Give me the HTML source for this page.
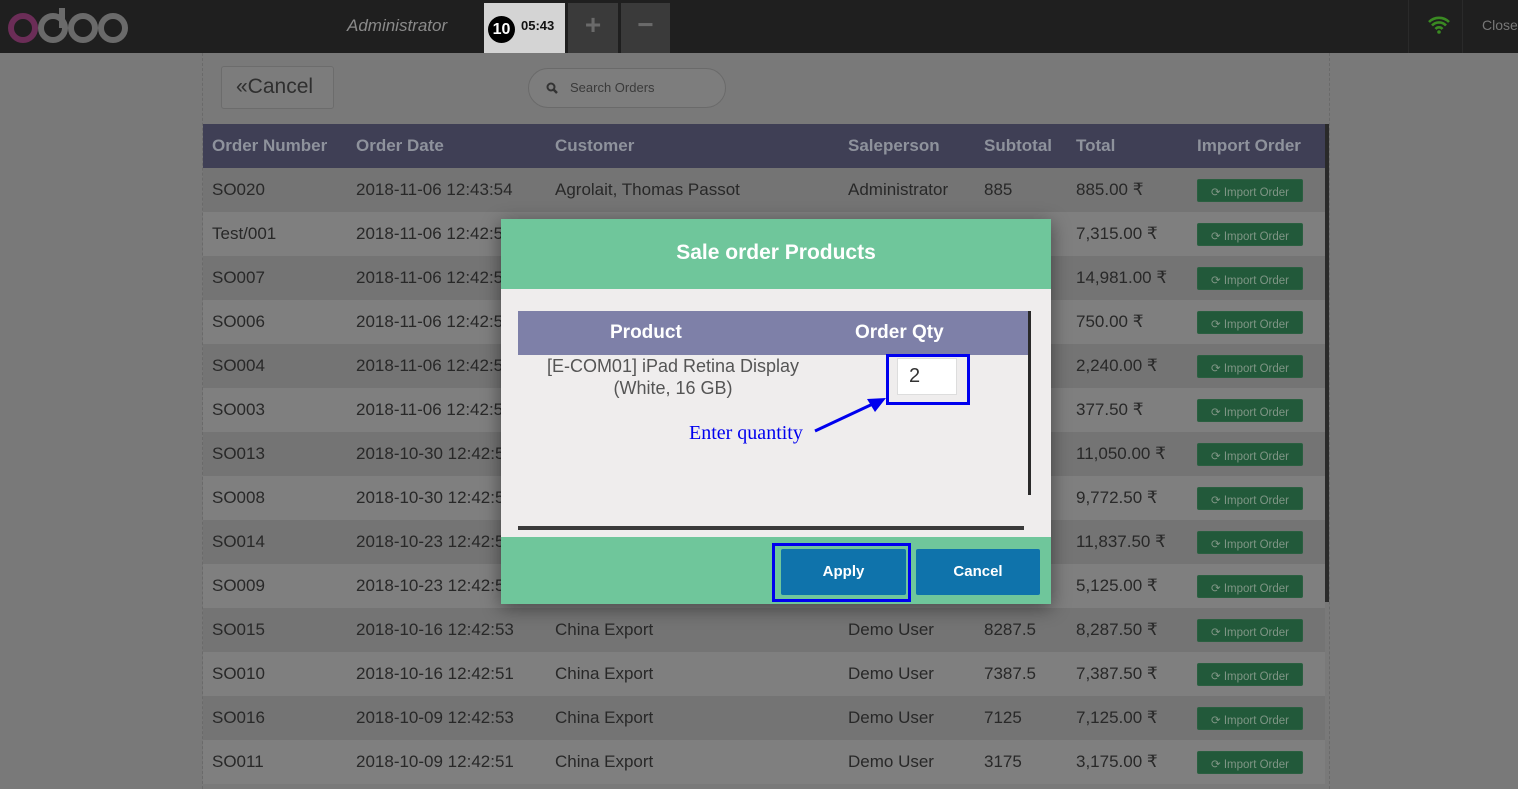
<!DOCTYPE html>
<html><head><meta charset="utf-8"><style>
*{box-sizing:border-box;margin:0;padding:0}
body{width:1518px;height:789px;overflow:hidden;background:#797979;font-family:"Liberation Sans",sans-serif;position:relative}
.top{position:absolute;left:0;top:0;width:1518px;height:53px;background:#1f1f1f}
.admin{position:absolute;left:347px;top:16px;color:#8a8a8a;font-style:italic;font-size:17px}
.tab{position:absolute;top:3px;height:50px}
.main{position:absolute;left:202px;top:53px;width:1128px;height:736px;border-left:1px dashed #6a6a6a;border-right:1px dashed #6a6a6a}
.cancel{position:absolute;left:221px;top:66px;width:113px;height:43px;border:1px solid #6c6c6c;border-radius:3px;background:#7c7c7c;color:#2f2f2f;font-size:21px;padding:8px 0 0 14px}
.search{position:absolute;left:528px;top:68px;width:198px;height:40px;border:1px solid #6a6a6a;border-radius:20px;background:#7d7d7d;color:#3a3a3a;font-size:13px;padding:11px 0 0 41px}
table{border-collapse:collapse;position:absolute;left:203px;top:124px;width:1122px;font-size:17px;color:#282828}
th{background:#3f3f55;color:#8e929c;text-align:left;height:44px;font-size:17px;padding-left:9px}
td{height:44px;padding-left:9px;white-space:nowrap}
tr.d td{background:#747474}tr.l td{background:#7f7f7f}
.btn{display:inline-block;background:#22593a;color:#7f9585;font-size:11.5px;width:106px;height:23px;border-radius:2px;padding-top:5px;text-align:center;border:1px solid #2a5f40}
.sb{position:absolute;left:1325px;top:124px;width:4px;height:478px;background:#2a2a2a}
.modal{position:absolute;left:501px;top:219px;width:550px;height:385px;background:#efeded;box-shadow:0 4px 18px rgba(0,0,0,.45)}
.mh{height:70px;background:#6fc69b;color:#fff;font-weight:bold;font-size:21px;text-align:center;padding-top:22px}
.mf{position:absolute;left:0;top:318px;width:550px;height:67px;background:#6fc69b}
.b{position:absolute;top:12px;height:46px;width:124px;background:#0f73ab;color:#fff;font-weight:bold;font-size:15px;text-align:center;padding-top:14px;border-radius:2px}
</style></head><body>
<div class="top">
<svg style="position:absolute;left:6px;top:6px" width="126" height="38" viewBox="0 0 126 38">
<circle cx="17" cy="22" r="12" stroke="#6b2d57" stroke-width="6" fill="none"/>
<circle cx="47" cy="22" r="12" stroke="#6a6a6a" stroke-width="6" fill="none"/>
<path d="M56 2V22" stroke="#6a6a6a" stroke-width="6"/>
<circle cx="77" cy="22" r="12" stroke="#6a6a6a" stroke-width="6" fill="none"/>
<circle cx="107" cy="22" r="12" stroke="#6a6a6a" stroke-width="6" fill="none"/>
</svg>
<div class="admin">Administrator</div>
<div class="tab" style="left:484px;width:81px;background:#d4d4d4">
 <div style="position:absolute;left:4px;top:13px;width:27px;height:27px;border-radius:50%;background:#000;color:#fff;font-weight:bold;font-size:16px;text-align:center;padding-top:5px">10</div>
 <div style="position:absolute;left:37px;top:15px;font-size:13px;font-weight:bold;color:#111">05:43</div></div>
<div class="tab" style="left:568px;width:50px;background:#3a3a3a;color:#6a6a6a;font-size:28px;font-weight:bold;text-align:center;padding-top:6px">+</div>
<div class="tab" style="left:621px;width:49px;background:#3a3a3a;color:#6a6a6a;font-size:28px;font-weight:bold;text-align:center;padding-top:6px">−</div>
<div style="position:absolute;left:1408px;top:0;width:1px;height:53px;background:#2a2a2a"></div>
<div style="position:absolute;left:1462px;top:0;width:1px;height:53px;background:#2a2a2a"></div>
<svg style="position:absolute;left:1427px;top:15px" width="24" height="20" viewBox="0 0 24 20"><path d="M2 7a14 14 0 0 1 20 0M5 10.5a9.5 9.5 0 0 1 14 0M8.5 14a4.5 4.5 0 0 1 7 0" stroke="#3a8a22" stroke-width="2.6" fill="none"/><circle cx="12" cy="17" r="1.8" fill="#3a8a22"/></svg>
<div style="position:absolute;left:1482px;top:17px;color:#777;font-size:14px">Close</div>
</div>
<div class="main"></div>
<div class="cancel">«Cancel</div>
<div class="search"><svg style="position:absolute;left:17px;top:13px" width="12" height="12" viewBox="0 0 12 12"><circle cx="5" cy="5" r="3.5" stroke="#333" stroke-width="2" fill="none"/><path d="M7.5 7.5l3.5 3.5" stroke="#333" stroke-width="2.5"/></svg>Search Orders</div>
<table>
<tr><th style="width:144px">Order Number</th><th style="width:199px">Order Date</th><th style="width:293px">Customer</th><th style="width:136px">Saleperson</th><th style="width:92px">Subtotal</th><th style="width:121px">Total</th><th>Import Order</th></tr>
<tr class="d"><td>SO020</td><td>2018-11-06 12:43:54</td><td>Agrolait, Thomas Passot</td><td>Administrator</td><td>885</td><td>885.00 ₹</td><td><span class="btn">⟳ Import Order</span></td></tr>
<tr class="l"><td>Test/001</td><td>2018-11-06 12:42:53</td><td></td><td></td><td></td><td>7,315.00 ₹</td><td><span class="btn">⟳ Import Order</span></td></tr>
<tr class="d"><td>SO007</td><td>2018-11-06 12:42:53</td><td></td><td></td><td></td><td>14,981.00 ₹</td><td><span class="btn">⟳ Import Order</span></td></tr>
<tr class="l"><td>SO006</td><td>2018-11-06 12:42:53</td><td></td><td></td><td></td><td>750.00 ₹</td><td><span class="btn">⟳ Import Order</span></td></tr>
<tr class="d"><td>SO004</td><td>2018-11-06 12:42:53</td><td></td><td></td><td></td><td>2,240.00 ₹</td><td><span class="btn">⟳ Import Order</span></td></tr>
<tr class="l"><td>SO003</td><td>2018-11-06 12:42:53</td><td></td><td></td><td></td><td>377.50 ₹</td><td><span class="btn">⟳ Import Order</span></td></tr>
<tr class="d"><td>SO013</td><td>2018-10-30 12:42:53</td><td></td><td></td><td></td><td>11,050.00 ₹</td><td><span class="btn">⟳ Import Order</span></td></tr>
<tr class="l"><td>SO008</td><td>2018-10-30 12:42:53</td><td></td><td></td><td></td><td>9,772.50 ₹</td><td><span class="btn">⟳ Import Order</span></td></tr>
<tr class="d"><td>SO014</td><td>2018-10-23 12:42:53</td><td></td><td></td><td></td><td>11,837.50 ₹</td><td><span class="btn">⟳ Import Order</span></td></tr>
<tr class="l"><td>SO009</td><td>2018-10-23 12:42:53</td><td></td><td></td><td></td><td>5,125.00 ₹</td><td><span class="btn">⟳ Import Order</span></td></tr>
<tr class="d"><td>SO015</td><td>2018-10-16 12:42:53</td><td>China Export</td><td>Demo User</td><td>8287.5</td><td>8,287.50 ₹</td><td><span class="btn">⟳ Import Order</span></td></tr>
<tr class="l"><td>SO010</td><td>2018-10-16 12:42:51</td><td>China Export</td><td>Demo User</td><td>7387.5</td><td>7,387.50 ₹</td><td><span class="btn">⟳ Import Order</span></td></tr>
<tr class="d"><td>SO016</td><td>2018-10-09 12:42:53</td><td>China Export</td><td>Demo User</td><td>7125</td><td>7,125.00 ₹</td><td><span class="btn">⟳ Import Order</span></td></tr>
<tr class="l"><td>SO011</td><td>2018-10-09 12:42:51</td><td>China Export</td><td>Demo User</td><td>3175</td><td>3,175.00 ₹</td><td><span class="btn">⟳ Import Order</span></td></tr>
</table>
<div class="sb"></div>
<div class="modal">
<div class="mh">Sale order Products</div>
<div style="position:absolute;left:17px;top:92px;width:510px;height:44px;background:#7e80a8;color:#fff;font-weight:bold;font-size:19px">
 <span style="position:absolute;left:92px;top:11px">Product</span><span style="position:absolute;left:337px;top:11px">Order Qty</span></div>
<div style="position:absolute;left:527px;top:92px;width:3px;height:184px;background:#2a2a2a"></div>
<div style="position:absolute;left:17px;top:136px;width:310px;text-align:center;color:#555;font-size:18px;line-height:22px">[E-COM01] iPad Retina Display<br>(White, 16 GB)</div>
<div style="position:absolute;left:385px;top:135px;width:84px;height:51px;border:3px solid #0000ee"></div>
<div style="position:absolute;left:396px;top:139px;width:60px;height:37px;background:#fff;border:1px solid #ddd;font-size:20px;color:#333;padding:6px 0 0 11px">2</div>
<div style="position:absolute;left:188px;top:203px;color:#0000ee;font-family:'Liberation Serif',serif;font-size:20px">Enter quantity</div>
<svg style="position:absolute;left:310px;top:175px" width="80" height="40" viewBox="0 0 80 40"><path d="M4 37L66 8" stroke="#0000ee" stroke-width="3"/><path d="M75 4L56 5L64 18Z" fill="#0000ee"/></svg>
<div style="position:absolute;left:17px;top:307px;width:506px;height:4px;background:#3a3a3a"></div>
<div class="mf">
 <div style="position:absolute;left:271px;top:6px;width:139px;height:59px;border:3px solid #0000ee"></div>
 <div class="b" style="left:280px;width:125px">Apply</div>
 <div class="b" style="left:415px">Cancel</div>
</div>
</div>
</body></html>
